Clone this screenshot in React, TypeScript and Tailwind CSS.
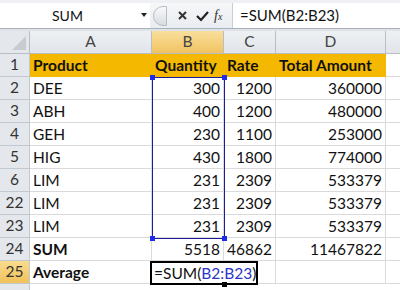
import React from "react";

const cols = [
  { key: "A", w: "w-[122px]" },
  { key: "B", w: "w-[72px]" },
  { key: "C", w: "w-[52px]" },
  { key: "D", w: "w-[110px]" },
];

const rows = [
  { n: "2", a: "DEE", b: "300", c: "1200", d: "360000" },
  { n: "3", a: "ABH", b: "400", c: "1200", d: "480000" },
  { n: "4", a: "GEH", b: "230", c: "1100", d: "253000" },
  { n: "5", a: "HIG", b: "430", c: "1800", d: "774000" },
  { n: "6", a: "LIM", b: "231", c: "2309", d: "533379" },
  { n: "22", a: "LIM", b: "231", c: "2309", d: "533379" },
  { n: "23", a: "LIM", b: "231", c: "2309", d: "533379" },
];

function RowHead({ n, active }: { n: string; active?: boolean }) {
  return (
    <div
      className={`w-[30px] shrink-0 flex items-center justify-center border-r border-b border-[#c3c8ce] text-[#333] ${
        active ? "bg-gradient-to-b from-[#f9dc8e] to-[#f1c15a]" : "bg-[#e4e8ec]"
      }`}
    >
      {n}
    </div>
  );
}

function Cell({ w, children, right, bold, fill }: { w: string; children?: React.ReactNode; right?: boolean; bold?: boolean; fill?: boolean }) {
  return (
    <div
      className={`${w} shrink-0 flex items-center px-[3px] pt-[2px] border-r border-b whitespace-nowrap ${
        fill ? "bg-[#f4b800] border-[#f4b800]" : "border-[#dadada]"
      } ${right ? "justify-end" : ""} ${bold ? "font-bold" : ""}`}
    >
      {children}
    </div>
  );
}

export default function App() {
  return (
    <div className="relative w-[400px] h-[290px] overflow-hidden bg-white text-[15.5px] text-[#111] font-['Lato','Liberation_Sans',sans-serif]">
      {/* formula bar */}
      <div className="h-[29px] bg-[#eef0f3] pt-[3px] flex border-b border-[#a9b1bc]">
        <div className="w-[150px] h-[25px] bg-white flex items-center relative">
          <span className="pl-[52px] text-[14px]">SUM</span>
          <span className="absolute left-[141px] top-[10px] w-0 h-0 border-l-[3px] border-r-[3px] border-t-[4px] border-l-transparent border-r-transparent border-t-[#222]" />
        </div>
        <div className="w-[82px] h-[25px] flex items-center bg-gradient-to-b from-[#f6f7f9] to-[#e9ecf0]">
          <div className="w-[14px] h-[20px] ml-[3px] rounded-l-full border border-[#b8bcc2] bg-gradient-to-b from-[#fafafa] to-[#d8dbe0]" />
          <span className="ml-[10px] text-[#333]">
            <svg width="11" height="11" viewBox="0 0 11 11">
              <path d="M2 2 L9 9 M9 2 L2 9" stroke="#333" strokeWidth="2" />
            </svg>
          </span>
          <span className="ml-[8px]">
            <svg width="13" height="12" viewBox="0 0 13 12">
              <path d="M1 6 L5 10 L12 2" stroke="#222" strokeWidth="2.2" fill="none" />
            </svg>
          </span>
          <span className="ml-[5px] italic font-['Liberation_Serif',serif] text-[14px] text-[#333]">
            f<span className="text-[10px]">x</span>
          </span>
        </div>
        <div className="flex-1 h-[25px] bg-white border-l border-[#c9ced5] flex items-center pl-[7px] text-[15px]">
          =SUM(B2:B23)
        </div>
      </div>
      <div className="h-[2px] bg-[#dfe3e8]" />

      {/* column header */}
      <div className="flex h-[23px] text-[#444]">
        <div className="w-[30px] shrink-0 bg-[#e4e8ec] border-r border-b border-[#b9bec5] relative">
          <span className="absolute right-[3px] bottom-[3px] w-0 h-0" style={{ borderBottom: "14px solid #c8ccd2", borderLeft: "14px solid transparent" }} />
        </div>
        {cols.map((c) => (
          <div
            key={c.key}
            className={`${c.w} shrink-0 flex items-center justify-center border-r border-b border-[#b9bec5] ${
              c.key === "B" ? "bg-gradient-to-b from-[#f9df9c] to-[#f1c35f]" : "bg-gradient-to-b from-[#eef0f3] to-[#e1e5ea]"
            }`}
          >
            {c.key}
          </div>
        ))}
        <div className="flex-1 border-b border-[#b9bec5] bg-gradient-to-b from-[#eef0f3] to-[#e1e5ea]" />
      </div>

      {/* row 1 */}
      <div className="flex h-[23px]">
        <RowHead n="1" />
        <Cell w="w-[122px]" bold fill>Product</Cell>
        <Cell w="w-[72px]" bold fill>Quantity</Cell>
        <Cell w="w-[52px]" bold fill>Rate</Cell>
        <Cell w="w-[110px]" bold fill>Total Amount</Cell>
        <div className="flex-1 border-b border-[#dadada]" />
      </div>

      {rows.map((r) => (
        <div key={r.n} className="flex h-[23px]">
          <RowHead n={r.n} />
          <Cell w="w-[122px]">{r.a}</Cell>
          <Cell w="w-[72px]" right>{r.b}</Cell>
          <Cell w="w-[52px]" right>{r.c}</Cell>
          <Cell w="w-[110px]" right>{r.d}</Cell>
          <div className="flex-1 border-b border-[#dadada]" />
        </div>
      ))}

      {/* row 24 */}
      <div className="flex h-[23px]">
        <RowHead n="24" />
        <Cell w="w-[122px]" bold>SUM</Cell>
        <Cell w="w-[72px]" right>5518</Cell>
        <Cell w="w-[52px]" right>46862</Cell>
        <Cell w="w-[110px]" right>11467822</Cell>
        <div className="flex-1 border-b border-[#dadada]" />
      </div>

      {/* row 25 */}
      <div className="flex h-[23px]">
        <RowHead n="25" active />
        <Cell w="w-[122px]" bold>Average</Cell>
        <Cell w="w-[72px]" />
        <Cell w="w-[52px]" />
        <Cell w="w-[110px]" />
        <div className="flex-1 border-b border-[#dadada]" />
      </div>
      <div className="flex h-[10px]">
        <RowHead n="" />
      </div>

      {/* range selection B2:B23 */}
      <div className="absolute left-[152px] top-[77px] w-[73px] h-[162px] border border-[#1c1c9a]">
        <span className="absolute -left-[3px] -top-[3px] w-[5px] h-[5px] bg-[#1b2cf0]" />
        <span className="absolute -right-[3px] -top-[3px] w-[5px] h-[5px] bg-[#1b2cf0]" />
        <span className="absolute -left-[3px] -bottom-[3px] w-[5px] h-[5px] bg-[#1b2cf0]" />
        <span className="absolute -right-[3px] -bottom-[3px] w-[5px] h-[5px] bg-[#1b2cf0]" />
      </div>

      {/* editing cell B25 */}
      <div className="absolute left-[150px] top-[261px] w-[108px] h-[24px] border-2 border-black bg-white flex items-center pl-[2px] pt-[1px] whitespace-nowrap">
        =SUM(<span className="text-[#2b35c8]">B2:B23</span>)
        <span className="inline-block w-[1px] h-[16px] bg-black ml-[1px]" />
        <span className="absolute left-[70px] -bottom-[4px] w-[5px] h-[5px] bg-black" />
      </div>
    </div>
  );
}
